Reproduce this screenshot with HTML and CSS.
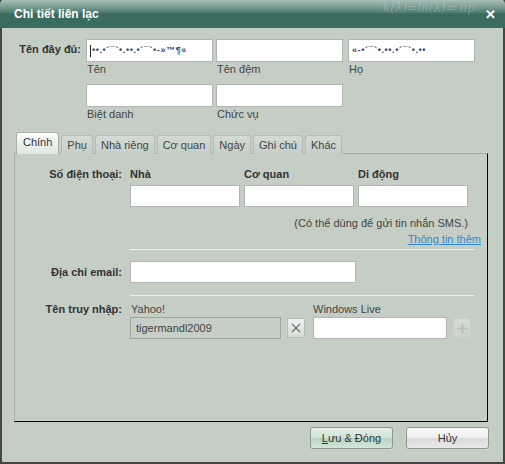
FILE: index.html
```html
<!DOCTYPE html>
<html lang="vi">
<head>
    <meta charset="UTF-8">
    <title>Chi tiết liên lạc</title>
    <link rel="stylesheet" href="styles.css">
</head>
<body>
    <div class="window">
        <div class="titlebar">
            <span class="title">Chi tiết liên lạc</span>
            <span class="chalk">k(λ)=ln(λ)= np</span>
            <span class="close">✕</span>
        </div>

        <div class="names">
            <div class="name-label">Tên đây đủ:</div>
            <div class="name-cell">
                <div class="box fancy"><span class="caret"></span>••.•´¯`•.••.•´¯`•-»™¶«</div>
                <div class="caption">Tên</div>
            </div>
            <div class="name-cell">
                <div class="box"></div>
                <div class="caption">Tên đệm</div>
            </div>
            <div class="name-cell">
                <div class="box fancy">«-•´¯`•.••.•´¯`•.••</div>
                <div class="caption">Họ</div>
            </div>

            <div></div>
            <div class="name-cell">
                <div class="box"></div>
                <div class="caption">Biệt danh</div>
            </div>
            <div class="name-cell">
                <div class="box"></div>
                <div class="caption">Chức vụ</div>
            </div>
        </div>

        <div class="tabs">
            <div class="tab active">Chính</div>
            <div class="tab">Phụ</div>
            <div class="tab">Nhà riêng</div>
            <div class="tab">Cơ quan</div>
            <div class="tab">Ngày</div>
            <div class="tab">Ghi chú</div>
            <div class="tab">Khác</div>
        </div>

        <div class="panel">
            <div class="row phone-head">
                <div class="lbl">Số điện thoại:</div>
                <div class="phone-grid">
                    <div class="col-title">Nhà</div>
                    <div class="col-title">Cơ quan</div>
                    <div class="col-title">Di động</div>
                </div>
            </div>
            <div class="row">
                <div class="lbl"></div>
                <div class="phone-grid">
                    <div class="box phone"></div>
                    <div class="box phone"></div>
                    <div class="box phone"></div>
                </div>
            </div>
            <div class="sms-note">(Có thể dùng để gửi tin nhắn SMS.)</div>
            <div class="more"><a href="#">Thông tin thêm</a></div>
            <div class="sep"></div>

            <div class="row email-row">
                <div class="lbl">Địa chỉ email:</div>
                <div class="box email"></div>
            </div>
            <div class="sep sep-2"></div>

            <div class="row login-head">
                <div class="lbl">Tên truy nhập:</div>
                <div class="svc yahoo-title">Yahoo!</div>
                <div class="svc">Windows Live</div>
            </div>
            <div class="row login-row">
                <div class="lbl"></div>
                <div class="box yahoo">tigermandl2009</div>
                <div class="icon-btn">
                    <svg width="10" height="10" viewBox="0 0 10 10"><path d="M1 1L9 9M9 1L1 9" stroke="#6f7470" stroke-width="1.2"/></svg>
                </div>
                <div class="box live"></div>
                <div class="icon-btn faded">
                    <svg width="11" height="11" viewBox="0 0 11 11"><path d="M5.5 0.5V10.5M0.5 5.5H10.5" stroke="#b7bcb8" stroke-width="1.6"/></svg>
                </div>
            </div>
        </div>

        <div class="actions">
            <button class="btn primary"><u>L</u>ưu &amp; Đóng</button>
            <button class="btn">Hủy</button>
        </div>
    </div>
</body>
</html>
```

FILE: styles.css
```css
* {
    box-sizing: border-box;
    margin: 0;
    padding: 0;
}

body {
    font-family: "Liberation Sans", Arial, sans-serif;
    font-size: 11px;
    color: #3a3a3a;
    background: #c4cec5;
}

.window {
    width: 505px;
    height: 464px;
    border: 2px solid #454545;
    border-top: 0;
    background: #c4cec5;
}

.titlebar {
    position: relative;
    height: 28px;
    margin: 0 -2px;
    padding: 0 14px;
    display: flex;
    align-items: center;
    justify-content: space-between;
    background: linear-gradient(#a9bfb8 0%, #6f9489 30%, #4a776c 46%, #3b6a5f 50%, #3b6a5f 100%);
    border-radius: 4px 4px 0 0;
    overflow: hidden;
}

.title {
    color: #fff;
    font-weight: bold;
    font-size: 12px;
}

.chalk {
    position: absolute;
    right: 30px;
    top: 1px;
    color: rgba(255,255,255,0.22);
    font-family: "DejaVu Serif", serif;
    font-size: 12px;
    font-style: italic;
}

.close {
    color: #fff;
    font-weight: bold;
    font-size: 13px;
    margin-right: -5px;
}

.box {
    height: 23px;
    background: #fff;
    border: 1px solid #b0b5b1;
}

.names {
    display: grid;
    grid-template-columns: 84px 130px 132px 127px;
    padding-top: 11px;
    row-gap: 8px;
}

.name-label {
    font-weight: bold;
    color: #333;
    text-align: right;
    padding-right: 5px;
    padding-top: 4px;
}

.name-cell {
    width: 127px;
}

.caption {
    line-height: 14px;
    height: 14px;
    padding-left: 1px;
    color: #444;
}

.fancy {
    font-size: 9px;
    font-weight: bold;
    line-height: 21px;
    padding-left: 3px;
    color: #34466a;
    white-space: nowrap;
    overflow: hidden;
    letter-spacing: 0.6px;
}

.caret {
    display: inline-block;
    width: 1px;
    height: 12px;
    background: #222;
    vertical-align: middle;
    margin-right: 1px;
}

.tabs {
    display: flex;
    align-items: flex-end;
    gap: 2px;
    margin: 11px 0 -1px 14px;
    height: 22px;
}

.tab {
    height: 19px;
    padding: 0 5px;
    line-height: 18px;
    color: #444;
    border: 1px solid #b4bcb5;
    border-bottom: 0;
    border-radius: 3px 3px 0 0;
    background: linear-gradient(#d3dbd4, #c6cfc7);
}

.tab.active {
    height: 22px;
    line-height: 19px;
    padding: 0 6px;
    color: #333;
    border-color: #a9b1aa;
    background: linear-gradient(#fbfcfb, #dfe6e0);
}

.panel {
    height: 269px;
    margin: 0 15px 0 12px;
    border: 1px solid #a9aea9;
    border-right-color: #000;
    border-bottom-color: #000;
}

.row {
    display: flex;
    align-items: center;
}

.lbl {
    width: 115px;
    flex: none;
    padding-right: 8px;
    text-align: right;
    font-weight: bold;
    color: #333;
}

.phone-head {
    margin-top: 13px;
    line-height: 14px;
}

.phone-grid {
    display: grid;
    grid-template-columns: 110px 110px 110px;
    column-gap: 4px;
}

.col-title {
    font-weight: bold;
    color: #333;
}

.box.phone {
    height: 22px;
    margin-top: 4px;
}

.sms-note {
    margin-top: 9px;
    line-height: 14px;
    text-align: right;
    padding-right: 19px;
    color: #444;
}

.more {
    margin-top: 2px;
    line-height: 14px;
    text-align: right;
    padding-right: 6px;
}

.more a {
    color: #2d8bd6;
}

.sep {
    height: 1px;
    margin: 3px 13px 0 115px;
    background: #eef1ee;
}

.email-row {
    margin-top: 11px;
}

.box.email {
    width: 226px;
    height: 22px;
}

.sep.sep-2 {
    margin-top: 12px;
}

.login-head {
    margin-top: 6px;
    line-height: 14px;
}

.svc {
    color: #444;
}

.yahoo-title {
    width: 183px;
    padding-left: 1px;
}

.login-row {
    margin-top: 1px;
}

.box.yahoo {
    width: 151px;
    height: 22px;
    background: #c6cfc7;
    border-color: #9ea49f;
    line-height: 20px;
    padding-left: 5px;
    color: #444;
}

.icon-btn {
    width: 18px;
    height: 20px;
    margin: 0 8px 0 6px;
    display: flex;
    align-items: center;
    justify-content: center;
    border: 1px solid #b7bdb8;
    border-radius: 2px;
    background: linear-gradient(#eef1ee, #d5dcd6);
}

.icon-btn.faded {
    border-color: #c9cfca;
    background: linear-gradient(#d4dbd5, #cbd3cc);
}

.box.live {
    width: 134px;
    height: 22px;
}

.actions {
    display: flex;
    justify-content: flex-end;
    gap: 13px;
    margin-top: 5px;
    padding-right: 14px;
}

.btn {
    width: 83px;
    height: 22px;
    font-family: "Liberation Sans", Arial, sans-serif;
    font-size: 11px;
    color: #333;
    border: 1px solid #8e9690;
    border-radius: 3px;
    background: linear-gradient(#fbfbfb, #ececec 50%, #dadada 52%, #e9e9e9);
}

.btn.primary {
    background: linear-gradient(#e4eee8, #cfe4d6 50%, #b8d6c2 52%, #d3e6d9);
}

.btn u {
    text-decoration: underline;
}
```
